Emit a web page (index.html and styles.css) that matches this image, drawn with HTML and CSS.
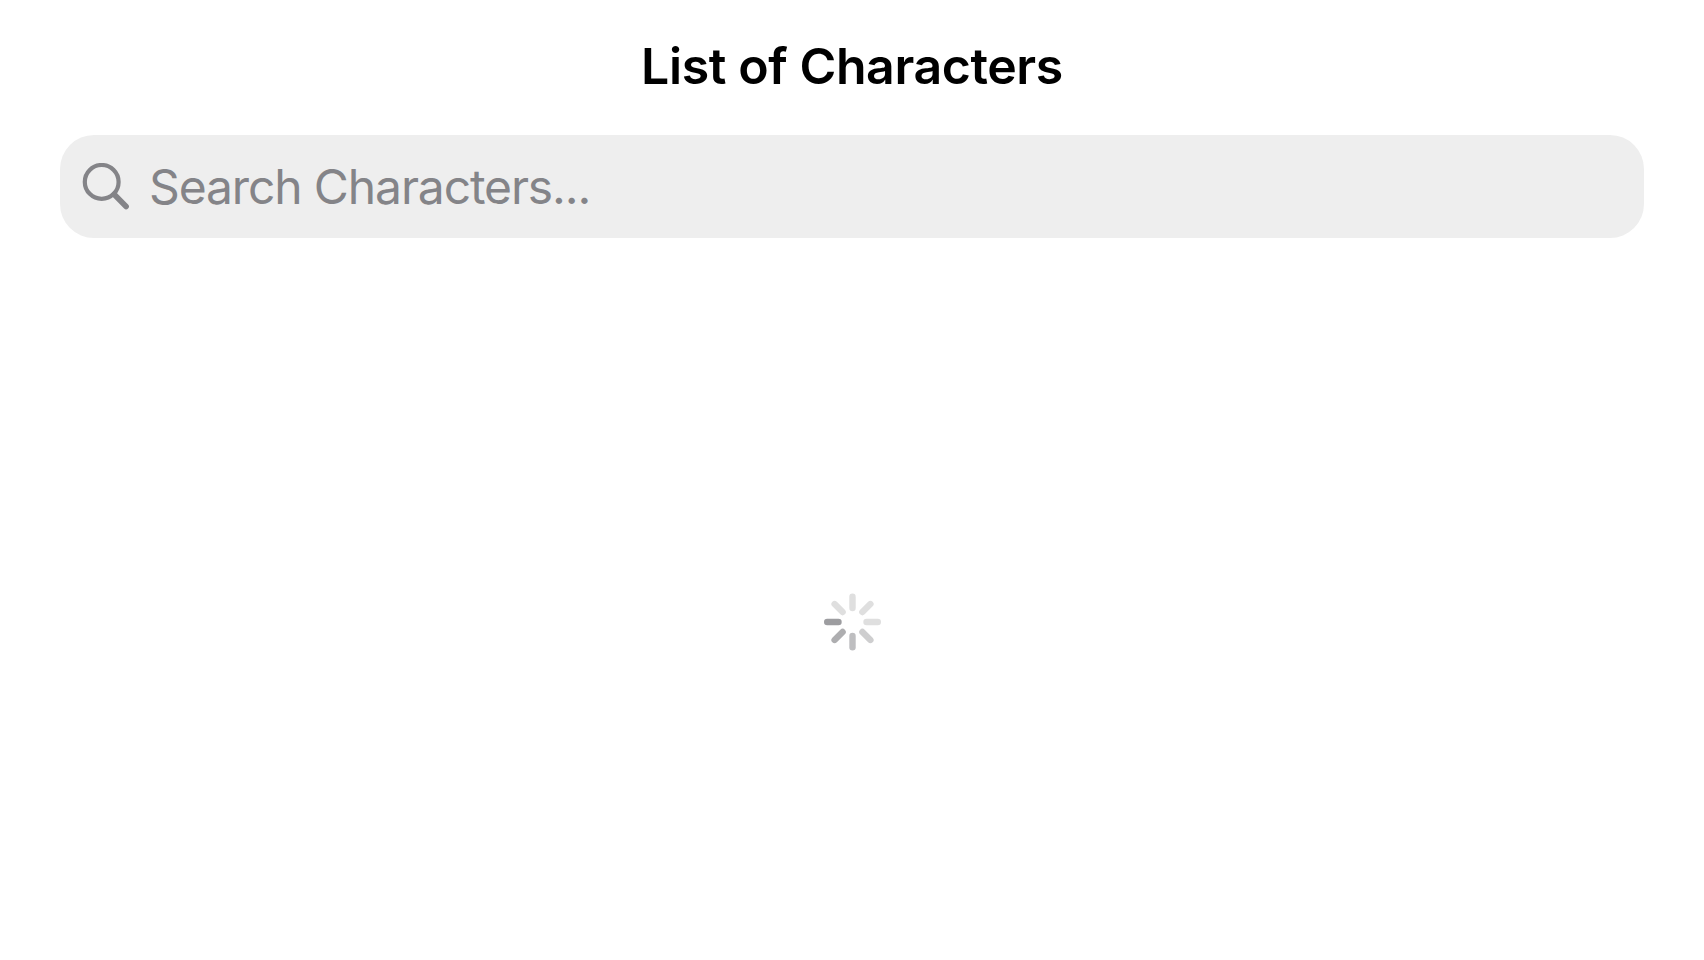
FILE: index.html
```html
<!DOCTYPE html>
<html lang="en">
<head>
<meta charset="utf-8">
<title>List of Characters</title>
<link rel="stylesheet" href="styles.css">
</head>
<body>
<header class="nav">
  <h1 class="title">List of Characters</h1>
  <div class="search">
    <svg class="search-icon" viewBox="0 0 48 48" aria-hidden="true">
      <circle cx="19.7" cy="18.9" r="16.9"/>
      <path class="handle" d="M32.3 31.5L44.1 43.5"/>
    </svg>
    <span class="placeholder">Search Characters...</span>
  </div>
</header>
<main class="content">
  <svg class="spinner" viewBox="-30.5 -30 60 60" role="img" aria-label="Loading">
    <path stroke="#dfdfdf" d="M0-14V-25.3"/>
    <path stroke="#dfdfdf" d="M0-14V-25.3" transform="rotate(45)"/>
    <path stroke="#dfdfdf" d="M0-14V-25.3" transform="rotate(90)"/>
    <path stroke="#cececf" d="M0-14V-25.3" transform="rotate(135)"/>
    <path stroke="#bebec0" d="M0-14V-25.3" transform="rotate(180)"/>
    <path stroke="#aeaeb0" d="M0-14V-25.3" transform="rotate(225)"/>
    <path stroke="#9d9da0" d="M0-14V-25.3" transform="rotate(270)"/>
    <path stroke="#dfdfdf" d="M0-14V-25.3" transform="rotate(315)"/>
  </svg>
</main>
</body>
</html>
```
FILE: styles.css
```css
body {
  margin: 0;
  height: 960px;
  display: flex;
  flex-direction: column;
  background: #fff;
  font-family: Inter, "Liberation Sans", sans-serif;
}
.nav {
  padding: 0 60px;
}
.title {
  margin: 0;
  height: 135px;
  line-height: 132px;
  text-align: center;
  font-size: 50px;
  font-weight: 600;
  letter-spacing: -0.4px;
  color: #000;
}
.search {
  height: 103px;
  box-sizing: border-box;
  padding: 0 22px;
  display: flex;
  align-items: center;
  gap: 19px;
  border-radius: 34px;
  background: #eee;
}
.search-icon {
  width: 48px;
  height: 48px;
  fill: none;
  stroke: #848488;
  stroke-width: 4.2;
  stroke-linecap: round;
}
.handle {
  stroke-width: 5.6;
}
.placeholder {
  font-size: 48px;
  line-height: 58px;
  letter-spacing: -1.13px;
  color: #848488;
  white-space: nowrap;
}
.content {
  flex: 1;
  box-sizing: border-box;
  display: flex;
  justify-content: center;
  align-items: center;
  padding-top: 45px;
}
.spinner {
  width: 60px;
  height: 60px;
  fill: none;
  stroke-width: 6.4;
  stroke-linecap: round;
}
```
